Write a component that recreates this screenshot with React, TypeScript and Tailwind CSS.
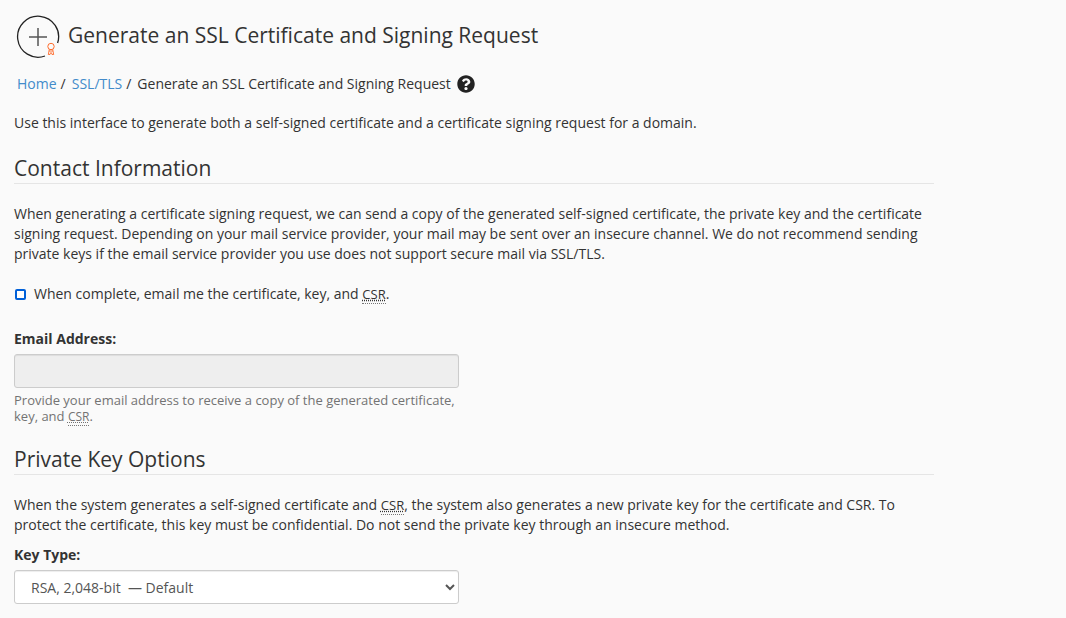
import type { ReactNode } from "react";

const Csr = ({ small = false }: { small?: boolean }) => (
    <abbr
        title="Certificate Signing Request"
        className={`border-b border-dotted border-[#777] underline decoration-dotted ${
            small ? "text-[12px]" : "text-[13px]"
        }`}
    >
        CSR
    </abbr>
);

const AppIcon = () => (
    <svg viewBox="0 0 48 48" className="h-12 w-12 shrink-0" fill="none" aria-hidden="true">
        <path
            d="M31 44 A20.500 20.500 0 1 1 43.600 31"
            stroke="#222"
            strokeWidth="1.3"
        />
        <path d="M24 16 V34 M15 25 H33" stroke="#555" strokeWidth="1.5" />
        <circle cx="37" cy="34.500" r="3.200" stroke="#ff6c2c" strokeWidth="1" />
        <path
            d="M35.300 37.300 L34.300 42.500 H36 L36.500 40.800 H37.500 L38 42.500 H39.700 L38.700 37.300 M35 39 H39"
            stroke="#ff6c2c"
            strokeWidth="0.9"
        />
    </svg>
);

const HelpIcon = () => (
    <svg viewBox="0 0 512 512" className="h-[18px] w-[18px]" fill="#222" aria-hidden="true">
        <path d="M504 256c0 137-111 248-248 248S8 393 8 256C8 119.100 119 8 256 8s248 111.100 248 248zM262.700 90c-54.500 0-89.300 23-116.500 63.800-3.500 5.300-2.400 12.400 2.700 16.300l34.700 26.300c5.200 3.900 12.600 3 16.700-2.100 17.900-22.700 30.100-35.800 57.300-35.800 20.400 0 45.700 13.100 45.700 33 0 15-12.400 22.700-32.500 34C247.100 238.500 216 254.900 216 296v4c0 6.600 5.400 12 12 12h56c6.600 0 12-5.400 12-12v-1.300c0-28.500 83.200-29.600 83.200-106.700 0-58-60.200-102-116.500-102zM256 338c-25.400 0-46 20.600-46 46s20.600 46 46 46 46-20.600 46-46-20.600-46-46-46z" />
    </svg>
);

const SectionTitle = ({ children }: { children: ReactNode }) => (
    <h2 className="mb-5 border-b border-[#e5e5e5] pb-px text-[21px] leading-7">
        {children}
    </h2>
);

const field =
    "block h-[34px] w-full rounded-[3px] border border-[#ccc] px-3 shadow-[inset_0_1px_1px_rgba(0,0,0,0.075)]";

export default function App() {
    return (
        <div className="min-h-screen bg-[#fafafa] px-3.5 pt-3 pb-3.5 font-['Open_Sans',sans-serif] text-sm leading-5 text-[#333]">
            <header className="flex items-center gap-1.5">
                <AppIcon />
                <h1 className="pb-0.5 text-[21px] leading-6">
                    Generate an SSL Certificate and Signing Request
                </h1>
            </header>
            <nav aria-label="Breadcrumb" className="mt-3.5 flex items-center px-[3px]">
                <a href="#home" className="text-[#428bca]">
                    Home
                </a>
                <span className="ml-1 mr-1.5">/</span>
                <a href="#ssl" className="text-[#428bca]">
                    SSL/TLS
                </a>
                <span className="ml-1 mr-1.5">/</span>
                <span>Generate an SSL Certificate and Signing Request</span>
                <a href="#help" aria-label="Help" className="ml-1.5">
                    <HelpIcon />
                </a>
            </nav>
            <main className="mt-[19px] max-w-[920px]">
                <p className="mb-[21px]">
                    Use this interface to generate both a self-signed certificate and
                    a certificate signing request for a domain.
                </p>

                <SectionTitle>Contact Information</SectionTitle>
                <p>
                    When generating a certificate signing request, we can send a copy
                    of the generated self-signed certificate, the private key and the
                    certificate signing request. Depending on your mail service
                    provider, your mail may be sent over an insecure channel. We do
                    not recommend sending private keys if the email service provider
                    you use does not support secure mail via SSL/TLS.
                </p>
                <div className="mt-5 flex items-center">
                    <input
                        id="send-email"
                        type="checkbox"
                        className="ml-px h-[11px] w-[11px] appearance-none rounded-[2px] border-2 border-[#0060d8] bg-white checked:bg-[#0060d8]"
                    />
                    <label htmlFor="send-email" className="pl-2">
                        When complete, email me the certificate, key, and <Csr />.
                    </label>
                </div>
                <div className="mt-[25px] max-w-[445px]">
                    <label htmlFor="email" className="mb-[5px] block font-bold">
                        Email Address:
                    </label>
                    <input
                        id="email"
                        type="email"
                        disabled
                        aria-describedby="email-help"
                        className={`${field} bg-[#eee]`}
                    />
                    <p id="email-help" className="mt-1 text-[13px] leading-4 text-[#737373]">
                        Provide your email address to receive a copy of the generated
                        certificate, key, and <Csr small />.
                    </p>
                </div>

                <div className="mt-5">
                    <SectionTitle>Private Key Options</SectionTitle>
                </div>
                <p>
                    When the system generates a self-signed certificate and <Csr />,
                    the system also generates a new private key for the certificate
                    and CSR. To protect the certificate, this key must be
                    confidential. Do not send the private key through an insecure
                    method.
                </p>
                <div className="mt-2.5 max-w-[445px]">
                    <label htmlFor="key-type" className="mb-[5px] block font-bold">
                        Key Type:
                    </label>
                    <select id="key-type" className={`${field} bg-white text-[#555]`}>
                        <option>RSA, 2,048-bit &nbsp;— Default</option>
                    </select>
                </div>
            </main>
        </div>
    );
}
